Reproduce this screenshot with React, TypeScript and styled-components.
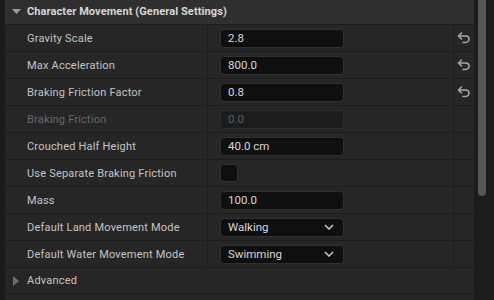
import React from "react";
import styled, { createGlobalStyle } from "styled-components";

const Global = createGlobalStyle`
  html, body {
    margin: 0;
    padding: 0;
    background: #1b1b1b;
  }
  body {
    font-family: Roboto, "Noto Sans", sans-serif;
  }
`;

const Panel = styled.div`
  display: flex;
  width: 494px;
  height: 300px;
  overflow: hidden;
  background: #1b1b1b;
`;

const Gutter = styled.div`
  width: 5px;
  flex: 0 0 5px;
  background: #1b1b1b;
`;

const Content = styled.div`
  flex: 1;
  display: flex;
  flex-direction: column;
`;

const Track = styled.div`
  width: 20px;
  flex: 0 0 20px;
  background: #1c1c1c;
  padding-left: 4px;
  box-sizing: border-box;
`;

const Thumb = styled.div`
  width: 8px;
  height: 196px;
  background: #575757;
  border-radius: 0 0 4px 4px;
`;

const Header = styled.div`
  height: 25px;
  box-sizing: border-box;
  padding-bottom: 2px;
  border-bottom: 1px solid #1c1c1c;
  background: #2f2f2f;
  display: flex;
  align-items: center;
  color: #d6d6d6;
  font-size: 11px;
  font-weight: 700;
  letter-spacing: 0.1px;
`;

const Caret = styled.span`
  width: 22px;
  display: flex;
  justify-content: center;
  svg {
    display: block;
  }
`;

const Row = styled.div`
  display: grid;
  grid-template-columns: 202px 246px 21px;
  height: 26px;
  border-bottom: 1px solid #1c1c1c;
  background: #262626;
`;

const Label = styled.div<{ $disabled?: boolean }>`
  display: flex;
  align-items: center;
  padding-left: 22px;
  font-size: 11px;
  color: ${(p) => (p.$disabled ? "#686868" : "#c4c4c4")};
  letter-spacing: 0.2px;
`;

const ValueCell = styled.div`
  border-left: 1px solid #1c1c1c;
  display: flex;
  align-items: center;
  padding-left: 12px;
`;

const ResetCell = styled.div`
  border-left: 1px solid #1c1c1c;
  display: flex;
  align-items: center;
  justify-content: center;
`;

const Field = styled.div<{ $disabled?: boolean }>`
  width: 124px;
  height: 19px;
  box-sizing: border-box;
  border-radius: 4px;
  border: 1px solid ${(p) => (p.$disabled ? "#2c2c2c" : "#303030")};
  background: ${(p) => (p.$disabled ? "#1c1c1c" : "#0f0f0f")};
  color: ${(p) => (p.$disabled ? "#5e5e5e" : "#d8d8d8")};
  font-size: 11.5px;
  display: flex;
  align-items: center;
  justify-content: space-between;
  padding: 0 9px 0 7px;
`;

const Check = styled.div`
  width: 18px;
  height: 18px;
  box-sizing: border-box;
  border-radius: 3px;
  border: 1px solid #303030;
  background: #0f0f0f;
`;

const Section = styled.div`
  height: 26px;
  box-sizing: border-box;
  border-bottom: 1px solid #1c1c1c;
  background: #262626;
  display: flex;
  align-items: center;
  color: #c4c4c4;
  font-size: 11px;
  letter-spacing: 0.2px;
`;

const Footer = styled.div`
  flex: 1;
  background: #262626;
`;

function ResetIcon() {
  return (
    <svg width="14" height="12" viewBox="0 0 14 12" fill="none">
      <path
        d="M4.5 1 1.5 4 4.5 7"
        stroke="#a8a8a8"
        strokeWidth="1.5"
        strokeLinecap="round"
        strokeLinejoin="round"
      />
      <path
        d="M1.8 4h7a3.2 3.2 0 0 1 0 6.4H6"
        stroke="#a8a8a8"
        strokeWidth="1.5"
        strokeLinecap="round"
      />
    </svg>
  );
}

function Chevron() {
  return (
    <svg width="10" height="6" viewBox="0 0 10 6" fill="none">
      <path d="M1 1l4 4 4-4" stroke="#c8c8c8" strokeWidth="1.5" />
    </svg>
  );
}

type Prop = {
  label: string;
  kind: "text" | "check" | "select";
  value?: string;
  disabled?: boolean;
  reset?: boolean;
};

const props: Prop[] = [
  { label: "Gravity Scale", kind: "text", value: "2.8", reset: true },
  { label: "Max Acceleration", kind: "text", value: "800.0", reset: true },
  { label: "Braking Friction Factor", kind: "text", value: "0.8", reset: true },
  { label: "Braking Friction", kind: "text", value: "0.0", disabled: true },
  { label: "Crouched Half Height", kind: "text", value: "40.0 cm" },
  { label: "Use Separate Braking Friction", kind: "check" },
  { label: "Mass", kind: "text", value: "100.0" },
  { label: "Default Land Movement Mode", kind: "select", value: "Walking" },
  { label: "Default Water Movement Mode", kind: "select", value: "Swimming" },
];

function PropRow({ p }: { p: Prop }) {
  return (
    <Row>
      <Label $disabled={p.disabled}>{p.label}</Label>
      <ValueCell>
        {p.kind === "check" ? (
          <Check />
        ) : (
          <Field $disabled={p.disabled}>
            <span>{p.value}</span>
            {p.kind === "select" && <Chevron />}
          </Field>
        )}
      </ValueCell>
      <ResetCell>{p.reset && <ResetIcon />}</ResetCell>
    </Row>
  );
}

export default function App() {
  return (
    <>
      <Global />
      <Panel>
        <Gutter />
        <Content>
          <Header>
            <Caret>
              <svg width="9" height="5" viewBox="0 0 9 5">
                <path d="M0 0h9L4.5 5z" fill="#9a9a9a" />
              </svg>
            </Caret>
            Character Movement (General Settings)
          </Header>
          {props.map((p) => (
            <PropRow key={p.label} p={p} />
          ))}
          <Section>
            <Caret>
              <svg width="6" height="10" viewBox="0 0 6 10">
                <path d="M0 0v10l6-5z" fill="#6e6e6e" />
              </svg>
            </Caret>
            Advanced
          </Section>
          <Footer />
        </Content>
        <Track>
          <Thumb />
        </Track>
      </Panel>
    </>
  );
}
